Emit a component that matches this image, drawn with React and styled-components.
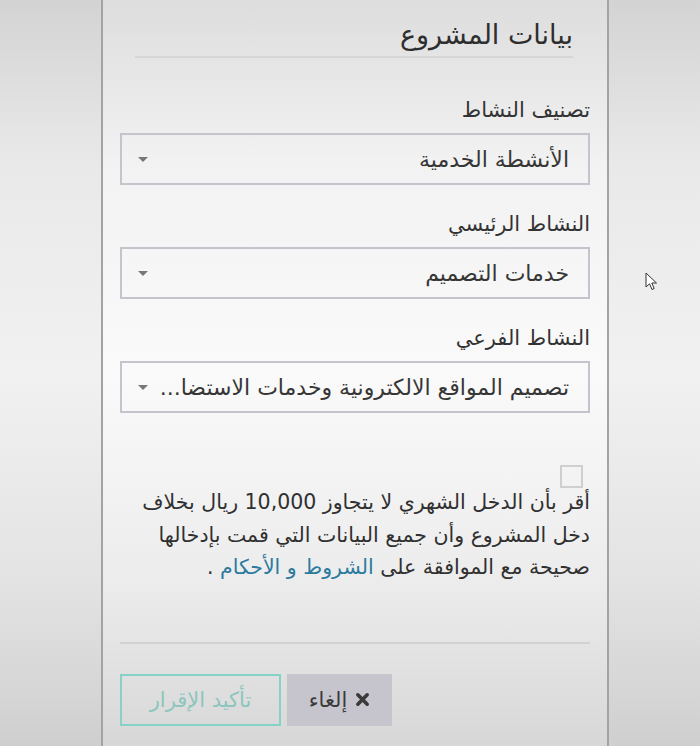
import React, { useState } from "react";
import styled, { createGlobalStyle } from "styled-components";

const GlobalStyle = createGlobalStyle`
  html, body {
    margin: 0;
    padding: 0;
  }
  body {
    font-family: "DejaVu Sans", "Noto Sans", sans-serif;
    background: linear-gradient(
      to bottom,
      #d3d3d3 0%,
      #e9e9e9 22%,
      #f1f1f1 50%,
      #e3e3e3 78%,
      #cfcfcf 100%
    );
  }
`;

const App = () => {
  const [agreed, setAgreed] = useState(false);

  return (
    <>
      <GlobalStyle />
      <Page>
        <Panel dir="rtl">
          <Header>
            <Title>بيانات المشروع</Title>
          </Header>

          <Field>
            <Label>تصنيف النشاط</Label>
            <Select value="الأنشطة الخدمية" />
          </Field>

          <Field>
            <Label>النشاط الرئيسي</Label>
            <Select value="خدمات التصميم" />
          </Field>

          <Field>
            <Label>النشاط الفرعي</Label>
            <Select value="تصميم المواقع الالكترونية وخدمات الاستضا..." />
          </Field>

          <Agreement>
            <CheckBox
              $checked={agreed}
              onClick={() => setAgreed(!agreed)}
              aria-label="checkbox"
            />
            <Declaration>
              أقر بأن الدخل الشهري لا يتجاوز 10,000 ريال بخلاف دخل المشروع وأن
              جميع البيانات التي قمت بإدخالها صحيحة مع الموافقة على{" "}
              <Terms href="#">الشروط و الأحكام</Terms>&nbsp;.
            </Declaration>
          </Agreement>

          <Divider />

          <Actions>
            <CancelButton>
              <svg width="15" height="15" viewBox="0 0 16 16">
                <path
                  d="M3 3 L13 13 M13 3 L3 13"
                  stroke="#3a3a3a"
                  strokeWidth="3.8"
                  strokeLinecap="round"
                />
              </svg>
              إلغاء
            </CancelButton>
            <ConfirmButton>تأكيد الإقرار</ConfirmButton>
          </Actions>
        </Panel>

        <Cursor width="13" height="19" viewBox="0 0 13 19">
          <path
            d="M1 1 L1 15 L4.5 11.8 L7 17.5 L9.2 16.5 L6.8 11 L11.5 11 Z"
            fill="#fff"
            stroke="#333"
            strokeWidth="1"
            strokeLinejoin="round"
          />
        </Cursor>
      </Page>
    </>
  );
};

const Select = ({ value }) => (
  <SelectBox>
    <SelectText>{value}</SelectText>
    <Caret />
  </SelectBox>
);

const Page = styled.div`
  position: relative;
  height: 746px;
  overflow: hidden;
  padding-left: 101px;
`;

const Panel = styled.div`
  box-sizing: border-box;
  width: 508px;
  height: 746px;
  padding: 0 17px;
  border-left: 2px solid #a3a3a3;
  border-right: 2px solid #a3a3a3;
  background: linear-gradient(
    to bottom,
    #dddddd 0%,
    #f2f2f2 22%,
    #fafafa 50%,
    #ececec 78%,
    #d7d7d7 100%
  );
  color: #383838;
`;

const Header = styled.div`
  margin: 0 17px 0 15px;
  padding: 20px 0 6px;
  border-bottom: 2px solid #d6d6d6;
`;

const Title = styled.h2`
  margin: 0;
  font-size: 27px;
  font-weight: normal;
  line-height: 30px;
  color: #2e2e2e;
`;

const Field = styled.div`
  margin-top: 38px;

  & + & {
    margin-top: 25px;
  }
`;

const Label = styled.div`
  font-size: 21px;
  line-height: 28px;
  margin-bottom: 9px;
  color: #333;
`;

const SelectBox = styled.div`
  box-sizing: border-box;
  height: 52px;
  display: flex;
  align-items: center;
  justify-content: space-between;
  padding: 0 19px 0 16px;
  border: 2px solid #c4c4cc;
  background: transparent;
`;

const SelectText = styled.span`
  font-size: 22px;
  color: #363636;
  white-space: nowrap;
`;

const Caret = styled.span`
  width: 0;
  height: 0;
  border-left: 5px solid transparent;
  border-right: 5px solid transparent;
  border-top: 5px solid #777;
`;

const Agreement = styled.div`
  margin-top: 52px;
`;

const CheckBox = styled.div`
  box-sizing: border-box;
  width: 23px;
  height: 23px;
  margin-right: 7px;
  border: 2px solid #cfcfcf;
  background: ${(p) => (p.$checked ? "#2f7fa0" : "transparent")};
  cursor: pointer;
`;

const Declaration = styled.p`
  margin: -2px 0 0;
  font-size: 20.5px;
  line-height: 32.5px;
  color: #303030;
`;

const Terms = styled.a`
  color: #2c7b9e;
  text-decoration: none;
`;

const Divider = styled.div`
  margin-top: 58px;
  border-top: 2px solid #d2d2d2;
`;

const Actions = styled.div`
  display: flex;
  justify-content: flex-end;
  gap: 6px;
  margin-top: 30px;
`;

const BaseButton = styled.button`
  box-sizing: border-box;
  height: 52px;
  font-family: inherit;
  font-size: 21px;
  display: flex;
  align-items: center;
  justify-content: center;
  gap: 8px;
  cursor: pointer;
`;

const ConfirmButton = styled(BaseButton)`
  width: 161px;
  background: transparent;
  border: 2px solid #86d2c6;
  color: #8cc6bd;
`;

const CancelButton = styled(BaseButton)`
  width: 105px;
  background: #c6c5cd;
  border: none;
  color: #3a3a3a;
`;

const Cursor = styled.svg`
  position: absolute;
  left: 645px;
  top: 272px;
`;

export default App;
